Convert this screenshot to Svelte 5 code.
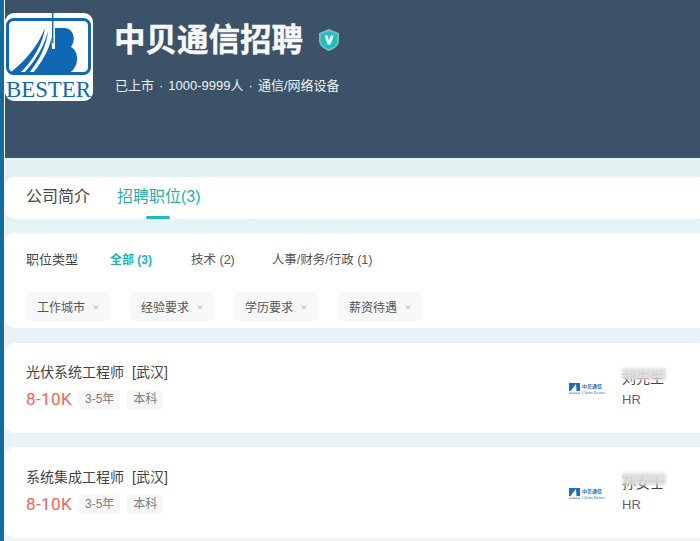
<script>
  const filters = ["工作城市", "经验要求", "学历要求", "薪资待遇"];
  const types = [
    { label: "全部 (3)", active: true },
    { label: "技术 (2)", active: false },
    { label: "人事/财务/行政 (1)", active: false },
  ];
  const jobs = [
    { title: "光伏系统工程师", hr: "刘先生" },
    { title: "系统集成工程师", hr: "孙女士" },
  ];
</script>

<div class="page">
  <div class="edge"></div>
  <main>
    <header class="hero">
      <div class="logo">
        <svg viewBox="0 0 88 88" width="88" height="88">
          <rect x="2.5" y="6.5" width="82" height="54" rx="6" fill="none" stroke="#0f68b4" stroke-width="3" />
          <path d="M5 60 C20 48 33 33 40 15 C38 30 28 48 15 60 Z" fill="#0f68b4" />
          <path d="M19 60 C30 48 39 34 43 18 C42 32 34 48 24 60 Z" fill="#0f68b4" />
          <path d="M28 60 C36 50 44 38 46.5 24 L47 36 L50 36 L50 15 H58 C68 14 72 26 66 34 C75 39 74 55 64 60 Z" fill="#0f68b4" />
          <path d="M47.7 0 V30" stroke="#0f68b4" stroke-width="1.4" />
          <text x="1" y="84" textLength="85" lengthAdjust="spacingAndGlyphs" class="logo-text">BESTER</text>
        </svg>
      </div>
      <div class="info">
        <div class="name-row">
          <h1>中贝通信招聘</h1>
          <svg class="shield" viewBox="0 0 22 24" width="22" height="24">
            <path d="M11 1 L21 5 V13 C21 18 16 21 11 23 C6 21 1 18 1 13 V5 Z" fill="#7fb6bd" />
            <path d="M11 3.5 L19 6.5 V13 C19 17 15 19.5 11 21 C7 19.5 3 17 3 13 V6.5 Z" fill="#17c1c1" />
            <path d="M6.5 7.5 H9.6 L11 13 L12.8 7.5 H15.8 L12.4 16.5 H9.6 Z" fill="#fff" />
          </svg>
        </div>
        <div class="meta">
          <span>已上市</span><i>·</i><span>1000-9999人</span><i>·</i><span>通信/网络设备</span>
        </div>
      </div>
    </header>

    <div class="content">
      <nav class="tabs">
        <span class="tab">公司简介</span>
        <span class="tab current">招聘职位(3)</span>
      </nav>

      <section class="filter">
        <div class="types">
          <span class="types-title">职位类型</span>
          {#each types as t}
            <span class="type" class:active={t.active}>{t.label}</span>
          {/each}
        </div>
        <div class="selects">
          {#each filters as f}
            <div class="select">{f}<b class="caret"></b></div>
          {/each}
        </div>
      </section>

      {#each jobs as job}
        <article class="job">
          <div class="job-main">
            <div class="job-title">{job.title}<span class="city">[武汉]</span></div>
            <div class="job-line">
              <span class="salary">8-10K</span>
              <span class="tag">3-5年</span>
              <span class="tag">本科</span>
            </div>
          </div>
          <div class="job-logo">
            <svg viewBox="0 0 36 14" width="36" height="14">
              <rect x="0" y="1" width="11" height="8" fill="#1f6fb5" />
              <path d="M1.5 9 L7 2 L7.5 9 Z" fill="#fff" />
              <rect x="0" y="10.5" width="11" height="1.4" fill="#8fb4d4" />
              <text x="13" y="6" class="mini-cn">中贝通信</text>
              <text x="13" y="11.5" class="mini-en">China Bester</text>
            </svg>
          </div>
          <div class="job-hr">
            <div class="hr-name">{job.hr}<span class="smudge"></span></div>
            <div class="hr-role">HR</div>
          </div>
        </article>
      {/each}
    </div>
  </main>
</div>

<style>
  :global(body) {
    margin: 0;
    overflow: hidden;
    background: #fff;
  }

  .page {
    display: flex;
    width: 700px;
    height: 541px;
    overflow: hidden;
    font-family: "Liberation Sans", "Noto Sans CJK SC", sans-serif;
    color: #333;
  }

  .edge {
    flex: none;
    width: 4px;
    background: #166b9c;
    border-right: 1px solid #f4f8fa;
  }

  main {
    flex: 1;
    min-width: 0;
  }

  .hero {
    display: flex;
    height: 158px;
    box-sizing: border-box;
    padding-top: 13px;
    background: #3b5268;
    color: #fff;
  }

  .logo {
    flex: none;
    width: 88px;
    height: 88px;
    background: #fff;
    border-radius: 9px;
    overflow: hidden;
  }

  .logo svg {
    display: block;
  }

  .logo-text {
    font-family: "Liberation Serif", serif;
    font-size: 23px;
    fill: #0f68b4;
  }

  .info {
    margin-left: 21px;
  }

  .name-row {
    display: flex;
    align-items: center;
    height: 42px;
    margin-top: 6px;
  }

  h1 {
    margin: 0;
    font-size: 31.5px;
    line-height: 42px;
    font-weight: 700;
    color: #f7f9fa;
    -webkit-text-stroke: 0.4px #f7f9fa;
  }

  .shield {
    margin-left: 15px;
  }

  .meta {
    display: flex;
    align-items: center;
    margin: 15px 0 0 1px;
    font-size: 13px;
    line-height: 20px;
    color: #f0f3f5;
  }

  .meta i {
    margin: 0 5px;
    font-style: normal;
  }

  .content {
    display: flex;
    flex-direction: column;
    height: 383px;
    box-sizing: border-box;
    padding-top: 19px;
    background: linear-gradient(#e4f2f4, #eef3f8);
  }

  .tabs {
    display: flex;
    gap: 27px;
    height: 42px;
    flex: none;
    padding-left: 21px;
    background: #fff;
    border-radius: 10px 0 0 10px;
  }

  .tab {
    position: relative;
    font-size: 16px;
    line-height: 40px;
    color: #444;
  }

  .tab.current {
    color: #2aaead;
  }

  .tab.current::after {
    content: "";
    position: absolute;
    left: 29px;
    bottom: 0;
    width: 24px;
    height: 3px;
    background: #1fbcb8;
    border-radius: 2px;
  }

  .filter {
    flex: none;
    margin-top: 14px;
    height: 95px;
    box-sizing: border-box;
    padding: 15px 0 0 21px;
    background: #fff;
    border-radius: 10px 0 0 10px;
  }

  .types {
    display: flex;
    align-items: center;
    height: 20px;
    font-size: 12.5px;
    color: #555;
  }

  .types-title {
    width: 84px;
    font-size: 13px;
    color: #444;
  }

  .type {
    margin-right: 37px;
  }

  .type.active {
    font-size: 12px;
    font-weight: 700;
    color: #1fb3b0;
    margin-right: 39px;
  }

  .selects {
    display: flex;
    gap: 20px;
    margin-top: 24px;
  }

  .select {
    display: flex;
    align-items: center;
    box-sizing: border-box;
    width: 84px;
    height: 29px;
    padding-left: 11px;
    background: #f6f7f8;
    border-radius: 3px;
    font-size: 12px;
    color: #555;
  }

  .caret {
    margin: 2px 0 0 8px;
    border: 3.5px solid transparent;
    border-top: 4px solid #ccc;
    border-bottom: 0;
  }

  .job {
    display: flex;
    flex: none;
    height: 90px;
    margin-top: 14px;
    background: #fff;
    border-radius: 10px 0 0 10px;
  }

  .job:first-of-type {
    margin-top: 15px;
  }

  .job + .job {
    padding-top: 1px;
  }

  .job-main {
    flex: 1;
    padding: 19px 0 0 21px;
  }

  .job-title {
    font-size: 14px;
    line-height: 20px;
    color: #444;
  }

  .city {
    margin-left: 8px;
  }

  .job-line {
    display: flex;
    align-items: center;
    margin-top: 7px;
  }

  .salary {
    width: 53px;
    font-family: "Roboto", sans-serif;
    font-size: 17px;
    letter-spacing: 0.4px;
    color: #f4645a;
  }

  .tag {
    margin-right: 7px;
    padding: 0 6px;
    height: 19px;
    line-height: 19px;
    font-size: 12px;
    color: #808080;
    background: #f7f7f7;
    border-radius: 3px;
  }

  .job-logo {
    flex: none;
    width: 53px;
    padding-top: 39px;
  }

  .job-logo svg {
    display: block;
  }

  .mini-cn {
    font-size: 5px;
    font-weight: 700;
    fill: #2a70ad;
  }

  .mini-en {
    font-family: "Liberation Serif", serif;
    font-size: 4.5px;
    fill: #2a70ad;
  }

  .job-hr {
    flex: none;
    width: 78px;
    padding-top: 25px;
  }

  .hr-name {
    position: relative;
    width: 42px;
    font-size: 14px;
    line-height: 20px;
    white-space: nowrap;
    color: #444;
  }

  .smudge {
    position: absolute;
    left: 0;
    top: 0;
    width: 44px;
    height: 12px;
    background: #dcdcdc;
    opacity: 0.92;
    filter: blur(1.5px);
  }

  .hr-role {
    margin-top: 3px;
    font-size: 13px;
    line-height: 18px;
    color: #666;
  }
</style>
